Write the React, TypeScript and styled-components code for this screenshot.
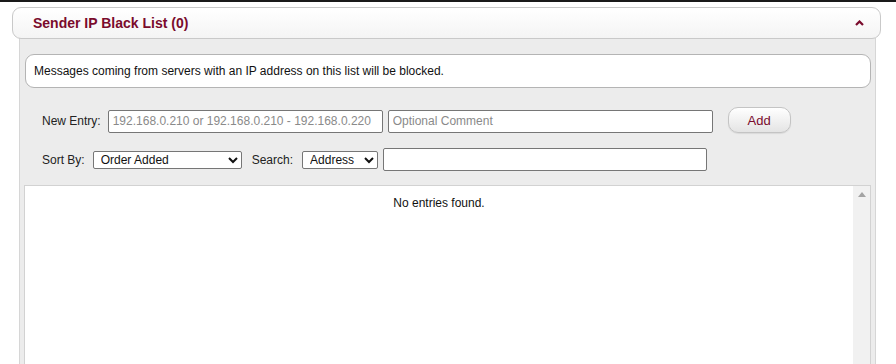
import React from "react";
import styled, { createGlobalStyle } from "styled-components";

const Global = createGlobalStyle`
  html, body { margin: 0; padding: 0; background: #ffffff; }
  body { font-family: "Liberation Sans", Arial, sans-serif; font-size: 12px; color: #222; }
  * { box-sizing: border-box; }
`;

const Page = styled.div`
  width: 896px;
  height: 364px;
  overflow: hidden;
  border-top: 2px solid #1a1a1a;
  display: flex;
  flex-direction: column;
  padding-top: 5px;
`;

const Header = styled.div`
  margin: 0 15px 0 12px;
  height: 32px;
  border: 1px solid #c9c9c9;
  border-radius: 9px;
  background: linear-gradient(#ffffff, #f4f4f4);
  display: flex;
  align-items: center;
  justify-content: space-between;
  padding: 0 16px 0 20px;
  position: relative;
  z-index: 1;
`;

const Title = styled.h2`
  margin: 0;
  font-size: 14px;
  font-weight: bold;
  color: #7a0b2c;
`;

const Chevron = styled.svg`
  width: 9px;
  height: 6px;
  display: block;
`;

const Panel = styled.div`
  flex: 1;
  margin: -1px 20px 0 19px;
  background: #ececec;
  border-left: 1px solid #d6d6d6;
  border-right: 1px solid #d6d6d6;
  padding: 16px 4px 0 5px;
  display: flex;
  flex-direction: column;
`;

const Info = styled.div`
  height: 34px;
  background: #ffffff;
  border: 1px solid #b4b4b4;
  border-radius: 9px;
  display: flex;
  align-items: center;
  padding: 0 8px;
  font-size: 12px;
  color: #111;
`;

const Form = styled.div`
  padding: 21px 0 0 17px;
  display: flex;
  flex-direction: column;
  gap: 15px;
`;

const Row = styled.div`
  display: flex;
  align-items: center;
`;

const Label = styled.label<{ $gap?: number }>`
  font-size: 12px;
  color: #222;
  margin-right: ${(p) => p.$gap ?? 7}px;
`;

const Input = styled.input<{ $w: number; $mr?: number }>`
  width: ${(p) => p.$w}px;
  height: 23px;
  border: 1px solid #767676;
  border-radius: 2px;
  padding: 0 4px;
  font-family: "Liberation Sans", Arial, sans-serif;
  font-size: 12px;
  color: #222;
  background: #fff;
  margin-right: ${(p) => p.$mr ?? 0}px;
  &::placeholder { color: #8a8a8a; }
`;

const Select = styled.select<{ $w: number; $mr?: number }>`
  width: ${(p) => p.$w}px;
  height: 18px;
  border: 1px solid #767676;
  border-radius: 2px;
  padding: 0 0 0 3px;
  font-family: "Liberation Sans", Arial, sans-serif;
  font-size: 12px;
  color: #111;
  background: #fff;
  margin-right: ${(p) => p.$mr ?? 0}px;
`;

const AddButton = styled.button`
  margin-left: 15px;
  width: 63px;
  height: 26px;
  margin-top: -2px;
  border: 1px solid #c4c4c4;
  border-radius: 10px;
  background: linear-gradient(#ffffff, #e4e4e4);
  box-shadow: 0 1px 1px rgba(0, 0, 0, 0.08);
  color: #7a0b2c;
  font-family: "Liberation Sans", Arial, sans-serif;
  font-size: 13px;
  cursor: pointer;
`;

const List = styled.div`
  flex: 1;
  margin: 14px 0 0 -1px;
  border-top: 1px solid #d2d2d2;
  border-left: 1px solid #d2d2d2;
  border-right: 1px solid #d2d2d2;
  background: #fff;
  display: flex;
`;

const ListBody = styled.div`
  flex: 1;
  display: flex;
  justify-content: center;
  padding-top: 10px;
  font-size: 12px;
  color: #111;
`;

const ScrollTrack = styled.div`
  width: 17px;
  background: #f1f1f1;
  display: flex;
  justify-content: center;
  padding-top: 6px;
`;

const UpArrow = styled.div`
  width: 0;
  height: 0;
  border-left: 4px solid transparent;
  border-right: 4px solid transparent;
  border-bottom: 5px solid #a3a3a3;
`;

export default function App() {
  return (
    <>
      <Global />
      <Page>
        <Header>
          <Title>Sender IP Black List (0)</Title>
          <Chevron viewBox="0 0 9 6">
            <path d="M1 5 L4.5 1.5 L8 5" fill="none" stroke="#7a0b2c" strokeWidth="2.2" />
          </Chevron>
        </Header>
        <Panel>
          <Info>Messages coming from servers with an IP address on this list will be blocked.</Info>
          <Form>
            <Row>
              <Label>New Entry:</Label>
              <Input $w={275} $mr={5} placeholder="192.168.0.210 or 192.168.0.210 - 192.168.0.220" />
              <Input $w={325} placeholder="Optional Comment" />
              <AddButton>Add</AddButton>
            </Row>
            <Row>
              <Label $gap={8}>Sort By:</Label>
              <Select $w={149} $mr={10} defaultValue="order">
                <option value="order">Order Added</option>
                <option value="address">Address</option>
              </Select>
              <Label $gap={9}>Search:</Label>
              <Select $w={76} $mr={5} defaultValue="address">
                <option value="address">Address</option>
                <option value="comment">Comment</option>
              </Select>
              <Input $w={324} />
            </Row>
          </Form>
          <List>
            <ListBody>No entries found.</ListBody>
            <ScrollTrack>
              <UpArrow />
            </ScrollTrack>
          </List>
        </Panel>
      </Page>
    </>
  );
}
